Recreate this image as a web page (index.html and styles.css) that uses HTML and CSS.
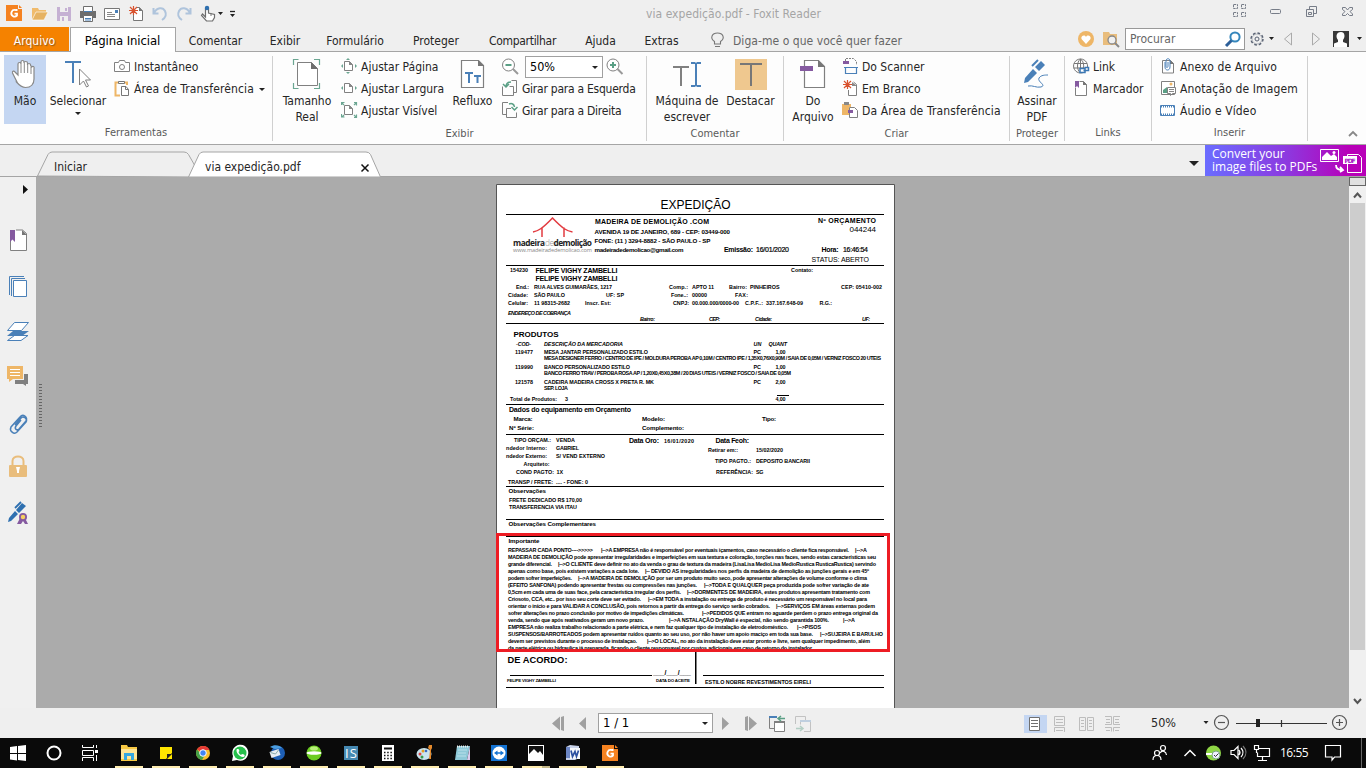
FILE: index.html
```html
<!DOCTYPE html>
<html lang="pt-BR">
<head>
<meta charset="utf-8">
<title>via expedição.pdf - Foxit Reader</title>
<link rel="stylesheet" href="styles.css">
</head>
<body>
<div class="app">
<header class="titlebar">
  <div class="quick">
    <svg width="26" height="27" viewBox="2 0 26 27"><path d="M6 5h12v4h4v12H6z" fill="#f58220"/><path d="M19 5l3 3h-3z" fill="#f58220"/><path d="M17.500 10h-2a3.300 3.300 0 1 0 1.500 5.500v-1.800h-2.500" fill="none" stroke="#fff" stroke-width="1.800"/></svg>
    <svg width="24" height="27" viewBox="28 0 24 27"><path d="M32 20V8h6l1 2h7v3H36z" fill="#f0bb6c"/><path d="M32 20l4-8h12l-4 8z" fill="#e6b262" stroke="#fff" stroke-width=".6"/></svg>
    <svg width="24" height="27" viewBox="52 0 24 27"><path d="M57 7h14v14H57z" fill="#c5b1d3"/><path d="M60 7h8v5h-8zM60 16h8v5h-8z" fill="#efefef"/><path d="M65 8h2v3h-2zM62 17h2v4h-2z" fill="#c5b1d3"/></svg>
    <svg width="24" height="27" viewBox="76 0 24 27"><path d="M80 11h16v7H80z" fill="#6e6e6e"/><path d="M83.500 6.500h9v5h-9z" fill="#fff" stroke="#6e6e6e"/><path d="M83.500 15.500h9v6h-9z" fill="#fff" stroke="#6e6e6e"/><path d="M84 11.500h8M85 18.500h6M85 20h6" stroke="#4a80b8"/></svg>
    <svg width="24" height="27" viewBox="100 0 24 27"><path d="M104.500 8.500h15v11h-15z" fill="#fff" stroke="#777"/><path d="M107 12.500h5M107 14.500h8M107 16.500h8" stroke="#888"/><path d="M115 10h3v3h-3z" fill="#4a80b8"/></svg>
    <svg width="24" height="27" viewBox="124 0 24 27"><path d="M133.500 13v7.500h9V11l-3-3.500h-3" fill="#fff" stroke="#777"/><path d="M139 7v4h4z" fill="#777"/><path d="M129 10.500h9M133.500 6v9M130 7l7 7M137 7l-7 7" stroke="#d9532f" stroke-width="1.200"/></svg>
    <svg width="24" height="27" viewBox="148 0 24 27"><path d="M154 13c3-6 9-6 11-2s0 7-3 9M153.500 8v5.500h5" fill="none" stroke="#afc4dc" stroke-width="2"/></svg>
    <svg width="24" height="27" viewBox="172 0 24 27"><path d="M190 13c-3-6-9-6-11-2s0 7 3 9M190.500 8v5.500h-5" fill="none" stroke="#afc4dc" stroke-width="2"/></svg>
    <svg width="44" height="27" viewBox="196 0 44 27"><path d="M205.500 17V8q1.500-2 3 0v5l6 1.500v3l-2 3.500h-6l-5-5.500 1-1.500z" fill="#fff" stroke="#6e6e6e" stroke-width="1.200"/><path d="M211 13v3" stroke="#777"/><circle cx="207" cy="8" r="2.200" fill="#2f70b0"/><path d="M218 12h5l-2.500 3zM230 14h5l-2.500 3z" fill="#222"/><path d="M230 11.500h5" stroke="#222" stroke-width="1.300"/></svg>
  </div>
  <div class="doc-title">via expedição.pdf - Foxit Reader</div>
  <svg class="winctl" width="150" height="27" viewBox="1216 0 150 27"><g fill="none" stroke="#777d88"><path d="M1233.500 4.500h4v4h-4zM1241.500 4.500h4v4h-4zM1233.500 12.500h4v4h-4zM1241.500 12.500h4v4h-4z" stroke-dasharray="2.500 .8"/><rect x="1270.500" y="9.500" width="10" height="4" rx="1"/><path d="M1306.500 9.500h7v7h-7zM1308.500 12.500h3v2h-3zM1309.500 9V6.500h7v7H1314"/><path d="M1342.500 7.500h3l2 2.500 2-2.500h3v2l-2.500 2 2.500 2.500v1.500h-3l-2-2-2 2h-3v-1.500l2.500-2.500-2.500-2z"/></g></svg>
</header>
<nav class="menubar">
  <span class="file-tab">Arquivo</span><span class="tab-on">Página Inicial</span>
  <span class="mi m1">Comentar</span><span class="mi m2">Exibir</span><span class="mi m3">Formulário</span><span class="mi m4">Proteger</span><span class="mi m5">Compartilhar</span><span class="mi m6">Ajuda</span><span class="mi m7">Extras</span>
  <svg width="26" height="24" viewBox="704 27 26 24"><path d="M714.500 44v-2.500c-5-3.500-2.500-8.500 3-8.500s8 5 3 8.500V44zM715 46.500h5" fill="none" stroke="#777" stroke-width="1.100"/></svg>
  <span class="tell">Diga-me o que você quer fazer</span>
  <div class="menu-right">
    <svg width="50" height="24" viewBox="1074 27 50 24"><circle cx="1086" cy="39" r="8" fill="#eeb667"/><path d="M1086 44l-4.500-5c-1-3 3-5 4.500-2 1.500-3 5.500-1 4.500 2z" fill="#fff"/><path d="M1103 45V32h6l1 2h7v11z" fill="#e9bd7c"/><circle cx="1112" cy="40" r="4" fill="#f0f0f0" stroke="#888" stroke-width="1.300"/><path d="M1115 43l4 4" stroke="#888" stroke-width="2"/></svg>
    <div class="search"><span>Procurar</span><svg width="18" height="18" viewBox="0 0 18 18"><circle cx="11" cy="7" r="4.600" fill="#fff" stroke="#3586bb" stroke-width="2"/><path d="M7.500 10.500L2 16" stroke="#2d5f99" stroke-width="3"/></svg></div>
    <svg width="120" height="24" viewBox="1246 27 120 24"><circle cx="1257" cy="39" r="5.900" fill="none" stroke="#596273" stroke-width="1.600" stroke-dasharray="2.600 2"/><circle cx="1257" cy="39" r="5" fill="#efefef" stroke="#8a909c" stroke-width=".6"/><circle cx="1257" cy="39" r="2" fill="none" stroke="#596273"/><path d="M1269 37h5l-2.500 3zM1357 37h5l-2.500 3z" fill="#222"/><path d="M1291.500 33v12l-7-6zM1312.500 33v12l7-6z" fill="none" stroke="#aaa"/><path d="M1333 31h16v16h-16z" fill="#383838"/><path d="M1341 32c4 0 4.500 5 2 8v2l4 1.500V47h-13v-3.500l4-1.500v-2c-2.500-3-2-8 3-8z" fill="#fff"/></svg>
  </div>
</nav>
<section class="ribbon">
  <div class="group g1">
    <div class="tools">
      <div class="big hand on"><svg width="34" height="34" viewBox="9 57 34 34"><path d="M18 82l-4.500-9c-.5-2 1.500-2.500 2.500-1l3 3V64c0-2 3-2 3 0v-2c0-2 3-2 3 0v1c0-2 3.500-2 3.500 0v2c0-2 3-2 3 0l1 2c2-1.500 3 0 2.500 2v10c0 5-3 8.500-8.500 8.500-4 0-6-2-9-5.500z" fill="#fff" stroke="#888" stroke-width="1.200"/><path d="M22 64v9M25.300 63v10M28.700 65v8M32 67v7" stroke="#888"/></svg><span>Mão</span></div>
      <div class="big sel"><svg width="34" height="34" viewBox="61 57 34 34"><path d="M65 61h16v2h-7v20h-2V63h-7z" fill="#4a80b8"/><path d="M79.500 69v16l4-4 3 6 2-1-3-6h5z" fill="#fff" stroke="#808080"/></svg><span>Selecionar</span><i class="down"></i></div>
      <div class="list l1">
        <div class="row"><svg width="20" height="20" viewBox="114 57 20 20"><path d="M114.500 62.500h4l1-2h5l1 2h4v9h-15z" fill="#fff" stroke="#808080"/><circle cx="122" cy="67" r="2.500" fill="none" stroke="#808080"/></svg><span>Instantâneo</span></div>
        <div class="row"><svg width="20" height="20" viewBox="114 79 20 20"><path d="M120 95.500h-4.500v-13H127V85" fill="none" stroke="#eeb667" stroke-width="2"/><path d="M118.500 81.500h6v2h-6z" fill="#fff" stroke="#777"/><path d="M121.500 86.500h4.500l2.500 3v6h-7z" fill="#fff" stroke="#777"/><path d="M125.500 86.500v3h3" fill="none" stroke="#777"/></svg><span class="wide">Área de Transferência</span><i class="down after"></i></div>
      </div>
    </div><div class="cap">Ferramentas</div>
  </div>
  <div class="group g2">
    <div class="tools">
      <div class="big tam"><svg width="34" height="34" viewBox="290 57 34 34"><path d="M297.500 62.500h14l6 6v17h-20z" fill="#fff" stroke="#808080"/><path d="M311 62v7h7z" fill="#6e6e6e"/><path d="M293.500 65v-5.500h5M314 59.500h5.500V65M293.500 83v5.500h5M314 88.500h5.500V83" fill="none" stroke="#6ba692" stroke-width="1.200"/></svg><span>Tamanho<br>Real</span></div>
      <div class="list l2">
        <div class="row"><svg width="20" height="20" viewBox="341 57 20 20"><path d="M344.500 61.500h5l3 3v6h-8z" fill="#fff" stroke="#808080"/><path d="M349 61v4h4z" fill="#888"/><path d="M346 60h4l-2-2zM346 72h4l-2 2zM343 64v4l-2-2zM355 64v4l2-2z" fill="#6ba692"/></svg><span>Ajustar Página</span></div>
        <div class="row"><svg width="20" height="20" viewBox="341 79 20 20"><path d="M344.500 83.500h5l3 3v6h-8z" fill="#fff" stroke="#808080"/><path d="M349 83v4h4z" fill="#888"/><path d="M343 86v4l-2-2zM355 86v4l2-2z" fill="#6ba692"/></svg><span>Ajustar Largura</span></div>
        <div class="row"><svg width="20" height="20" viewBox="341 101 20 20"><path d="M344.500 105.500h5l3 3v6h-8z" fill="#fff" stroke="#808080"/><path d="M349 105v4h4z" fill="#888"/><path d="M341.500 105v-2.500h3M354 102.500h2.500v3M341.500 114v3h3M354 117.500h2.500v-3M342 103l2 2M356 103l-2 2M342 117l2-2M356 117l-2-2" fill="none" stroke="#6ba692" stroke-width="1.200"/></svg><span>Ajustar Visível</span></div>
      </div>
      <div class="big ref"><svg width="34" height="34" viewBox="455 57 34 34"><path d="M460.500 60.500h17l5 5v22h-22z" fill="#fff" stroke="#808080" stroke-width="1.200"/><path d="M477 60v6h6z" fill="#777"/><path d="M464 73h8M468 73v10M473 76h7M476.500 76v7" stroke="#4a80b8" stroke-width="2"/></svg><span>Refluxo</span></div>
      <div class="list l3">
        <div class="row zoomrow"><svg width="23" height="22" viewBox="502 56 23 22"><circle cx="508.500" cy="65" r="6" fill="#fff" stroke="#808080"/><path d="M505.500 65h6" stroke="#5a9f85" stroke-width="2"/><path d="M513 69l5 5" stroke="#999" stroke-width="2"/></svg><div class="zoom">50%<i class="down"></i></div><svg width="20" height="22" viewBox="604 56 20 22"><circle cx="613" cy="65" r="6" fill="#fff" stroke="#808080"/><path d="M610 65h6M613 62v6" stroke="#5a9f85" stroke-width="2"/><path d="M617.500 69l5 5" stroke="#999" stroke-width="2"/></svg></div>
        <div class="row"><svg width="20" height="20" viewBox="502 79 20 20"><path d="M511.500 80.500h5v12H514M502.500 86.500v9h11v-9h-4" fill="none" stroke="#808080"/><path d="M506 87c0-3 1-5 5-5M503 84l3 3 3-3" fill="none" stroke="#5a9f85" stroke-width="1.500"/></svg><span>Girar para a Esquerda</span></div>
        <div class="row"><svg width="20" height="20" viewBox="502 101 20 20"><path d="M508 102.500h-5.500v12h4M511 108.500h-4.500v9h10v-5" fill="none" stroke="#808080"/><path d="M509 104c3-1 5 0 5.500 3M511.500 107l3 3 3-3" fill="none" stroke="#5a9f85" stroke-width="1.500"/></svg><span>Girar para a Direita</span></div>
      </div>
    </div><div class="cap">Exibir</div>
  </div>
  <div class="group g3">
    <div class="tools">
      <div class="big maq"><svg width="34" height="34" viewBox="670 57 34 34"><path d="M673 66h16v2h-7v18h-2V68h-7z" fill="#808080"/><path d="M691 62h4l1 1 1-1h4v2h-4v21h4v2h-4l-1-1-1 1h-4v-2h4V64h-4z" fill="#4a80b8"/></svg><span>Máquina de<br>escrever</span></div>
      <div class="big des"><svg width="34" height="34" viewBox="734 57 34 34"><path d="M735 59h32v31h-32z" fill="#efc88f"/><path d="M740 63h22v2h-10v21h-2V65h-10z" fill="#777"/></svg><span>Destacar</span></div>
    </div><div class="cap">Comentar</div>
  </div>
  <div class="group g4">
    <div class="tools">
      <div class="big arq"><svg width="34" height="34" viewBox="796 57 34 34"><path d="M804.500 60.500h14l6 6v21h-20z" fill="#fff" stroke="#808080" stroke-width="1.200"/><path d="M818 60v7h7z" fill="#777"/><path d="M800 66h13v5h-13z" fill="#855aa0"/></svg><span>Do<br>Arquivo</span></div>
      <div class="list l4">
        <div class="row"><svg width="20" height="20" viewBox="842 57 20 20"><path d="M845.500 61v-2.500h8l3 3V65" fill="none" stroke="#808080" stroke-dasharray="2 1"/><path d="M843 61h6v3h-6z" fill="#855aa0"/><path d="M844 67.500h14M845.500 67v6.500h11V67" fill="none" stroke="#4a80b8" stroke-width="1.200"/></svg><span>Do Scanner</span></div>
        <div class="row"><svg width="20" height="20" viewBox="842 79 20 20"><path d="M848.500 90v5.500h8v-11l-3-2.500" fill="#fff" stroke="#808080"/><path d="M852 82v4h5z" fill="#888"/><path d="M843 84.500h9M847.500 80v9M844 81l7 7M851 81l-7 7" stroke="#d9532f" stroke-width="1.200"/></svg><span>Em Branco</span></div>
        <div class="row"><svg width="20" height="20" viewBox="842 101 20 20"><path d="M842 104h9v3h-2v8h-7z" fill="#eeb667"/><path d="M844 102h5v3h-5z" fill="#888"/><path d="M849.500 107.500h5l3 3v7h-8z" fill="#fff" stroke="#808080"/><path d="M848 110h5v3h-5z" fill="#855aa0"/></svg><span class="wide">Da Área de Transferência</span></div>
      </div>
    </div><div class="cap">Criar</div>
  </div>
  <div class="group g5">
    <div class="tools"><div class="big ass"><svg width="34" height="34" viewBox="1020 57 34 34"><path d="M1041 61l4 4-6 6-4-4zM1033 69l4 4-9 9-4 1 1-5z" fill="#4a80b8"/><path d="M1032 66l6-6" stroke="#4a80b8" stroke-width="2"/><path d="M1028 86c5-1 8 2 13 1 6-2-4-5-2-9 2-3 6-3 9-3" fill="none" stroke="#4a80b8"/></svg><span>Assinar<br>PDF</span></div></div><div class="cap">Proteger</div>
  </div>
  <div class="group g6">
    <div class="tools"><div class="list">
      <div class="row"><svg width="20" height="20" viewBox="1073 57 20 20"><path d="M1080.500 59a7 7 0 1 0 .1 0zM1080.500 59c-4 3-4 11 0 14M1080.500 59c4 3 4 9 1 13M1080.500 59v14M1074 63.500h13M1073.500 68h13" fill="none" stroke="#777"/><path d="M1080 68.500h5v4h-5zM1083.500 70.500h5v-3h-4" fill="#fff" stroke="#3c78b4" stroke-width="1.500"/></svg><span>Link</span></div>
      <div class="row"><svg width="20" height="20" viewBox="1073 79 20 20"><path d="M1075.500 88v7.500h11v-11l-3-3h-4" fill="#fff" stroke="#808080"/><path d="M1083 81v4h4z" fill="#777"/><path d="M1075 81h4v7l-2-2-2 2z" fill="#855aa0"/></svg><span>Marcador</span></div>
    </div></div><div class="cap">Links</div>
  </div>
  <div class="group g7">
    <div class="tools"><div class="list">
      <div class="row"><svg width="20" height="20" viewBox="1160 57 20 20"><path d="M1162.500 60.500h8l3 3v9.500h-11z" fill="#fff" stroke="#808080"/><path d="M1170 60v4h4z" fill="#777"/><path d="M1165 62v5c0 4 5 4 5 0v-6c0-3-4-3-4 0v5c0 2 2 2 2 0v-4" fill="none" stroke="#4a80b8"/></svg><span class="wide">Anexo de Arquivo</span></div>
      <div class="row"><svg width="20" height="20" viewBox="1160 79 20 20"><path d="M1161.500 81.500h13v13h-13z" fill="#fff" stroke="#808080"/><path d="M1163 93v-3l4-3v6z" fill="#5a9f85"/><circle cx="1171" cy="84" r="1.500" fill="#eeb667"/><path d="M1167.500 87.500h8v6h-3l-2 2v-2h-3z" fill="#fff" stroke="#808080"/><path d="M1169 89.500h5M1169 91.500h5" stroke="#888"/></svg><span class="wide">Anotação de Imagem</span></div>
      <div class="row"><svg width="20" height="20" viewBox="1160 101 20 20"><path d="M1160.500 105.500h14v10h-14z" fill="#fff" stroke="#4a80b8"/><path d="M1161 106.500h14M1161 114.500h14" stroke="#4a80b8" stroke-width="2" stroke-dasharray="1 1"/></svg><span class="wide">Áudio e Vídeo</span></div>
    </div></div><div class="cap">Inserir</div>
  </div>
  <svg class="collapse" width="12" height="10" viewBox="0 0 12 10"><path d="M2 7l4-4 4 4" fill="none" stroke="#888" stroke-width="1.800"/></svg>
</section>
<div class="doctabs">
  <svg class="tabshape" width="346" height="32" viewBox="36 145 346 32"><path d="M37.500 176L48 154.500q1.500-2.500 4-2.500h132q3 0 4.500 2.500l6 10.500v12z" fill="#efefef" stroke="#a5a5a5"/><path d="M188.500 177L199 154.500q1.500-2.500 4-2.500h163q3 0 4.500 2.500L380.500 177z" fill="#fff" stroke="#a5a5a5"/><path d="M361.500 164.500l7 7M368.500 164.500l-7 7" stroke="#111" stroke-width="1.500"/></svg>
  <span class="t1">Iniciar</span><span class="t2">via expedição.pdf</span>
  <div class="promo-wrap"><i class="down"></i><div class="promo"><div class="promo-text"><span>Convert your</span><span>image files to PDFs</span></div><svg width="46" height="31" viewBox="1320 145 46 31"><path d="M1320.500 149.500h18v12h-18z" fill="none" stroke="#fff"/><path d="M1322 160v-3l5-5 4 4 3-2 3 3v3z" fill="#fff"/><circle cx="1334" cy="152.500" r="1.500" fill="#fff"/><path d="M1336 165c0 4 2 5 6 5M1340 167l3 3-3 2" fill="none" stroke="#fff" stroke-width="1.800"/><path d="M1347.500 164v8.500h14v-15l-3-3h-11v2" fill="none" stroke="#fff"/><path d="M1343 156h14v8h-14z" fill="#fff"/><text x="1344.500" y="162.500" textLength="11" class="pdf">PDF</text></svg></div></div>
</div>
<main class="work">
  <aside class="side">
    <svg width="36" height="40" viewBox="0 177 36 40"><path d="M23 185v9l5-4.500z" fill="#111"/></svg>
    <svg width="36" height="46" viewBox="0 217 36 46"><path d="M10.500 241v9.500h16v-17l-4-3.500H16" fill="#fff" stroke="#808080"/><path d="M22 230v5h5z" fill="#777"/><path d="M10 230h5v12l-2.500-2.500L10 242z" fill="#855aa0"/></svg>
    <svg width="36" height="46" viewBox="0 263 36 46"><path d="M9.500 295v-18.500H24M11.500 296v-17.500H25" fill="none" stroke="#4a80b8"/><path d="M13.500 280.500h13v16h-13z" fill="#fff" stroke="#4a80b8"/></svg>
    <svg width="36" height="46" viewBox="0 309 36 46"><path d="M7.500 340.500l7-5h13.500l-7 5z" fill="#fff" stroke="#4a80b8"/><path d="M7 336l6-5h16l-7 5z" fill="#4a80b8"/><path d="M7.500 330.500l7-8h14l-7 8z" fill="#fff" stroke="#4a80b8"/></svg>
    <svg width="36" height="46" viewBox="0 355 36 46"><path d="M24 374h4v10h-2v2l-3-2h-8v-4h9z" fill="#808080"/><path d="M7 366h16v13H13l-4 3v-3H7z" fill="#eeb667"/><path d="M10 369.500h10M10 372.500h10M10 375.500h10" stroke="#fff"/></svg>
    <svg width="36" height="46" viewBox="0 401 36 46"><path d="M15 425l6-7c2-3 7 1 5 4l-9 10c-3 3-8-1-6-5l9-10c3-4 8 0 6 4l-7 8c-2 2-5 0-3-3l5-6" fill="none" stroke="#4a80b8" stroke-width="1.500"/></svg>
    <svg width="36" height="46" viewBox="0 447 36 46"><path d="M12.500 466v-5c0-6 11-6 11 0v5" fill="none" stroke="#e9bd7c" stroke-width="2"/><rect x="9" y="465" width="18" height="12" rx="1" fill="#e9bd7c"/><path d="M16 467h4l-1 4v2h-2v-2z" fill="#fff"/></svg>
    <svg width="36" height="46" viewBox="0 493 36 46"><path d="M22 503l4 3-7 7-3-3zM15 511l3 3-7 7-3 1 1-4z" fill="#2f70b0"/><path d="M15 508l6-6" stroke="#2f70b0" stroke-width="1.800"/><path d="M20 518l-3 6h4l2-3 2 3h3l-3-6z" fill="#855aa0"/><circle cx="23" cy="517" r="4" fill="#855aa0"/><circle cx="23" cy="517" r="2.200" fill="#f5d060"/></svg>
  </aside>
  <div class="canvas">
    <i class="grip"></i>
    <svg class="page" width="399" height="524" viewBox="496 184 399 524">
      <path d="M496.500 709V184.500h398V709" fill="#fff" stroke="#555"/>
      <g class="rules"><path d="M506 214.500h378M506 265.500h378M506 323.500h378M777 395.500h12M506 404.500h378M506 434.500h378M506 486.500h378M506 519.500h378M506 536.500h378M510 675.500h142M703 675.500h181M506 687.500h378M695.500 652v32M696 652v32"/></g>
      <path d="M533 232c5-1 9-3 19.500-14 10.500 11 14.500 13 20 14M542 227.500v9.500M564 227.500v9.500" fill="none" stroke="#e23b40" stroke-width="1.500"/>
      <g class="logo"><text x="513" y="246" textLength="32">madeira</text><text x="545" y="246" textLength="9" class="lt">de</text><text x="553.500" y="246" textLength="38.500">demolição</text><text x="513" y="252" textLength="79" class="url">www.madeiradedemolicao.com</text></g>
      <g class="n"><text x="660.500" y="209.300" textLength="70" class="s13">EXPEDIÇÃO</text><text x="849.500" y="232" textLength="26.500" class="s8">044244</text><text x="811.500" y="262" textLength="57.500" class="s7">STATUS: ABERTO</text></g>
      <g class="b s7"><text x="595" y="224" textLength="114">MADEIRA DE DEMOLIÇÃO .COM</text><text x="818" y="223" textLength="58">Nº ORÇAMENTO</text><text x="724" y="252" textLength="29">Emissão:</text><text x="756" y="252" textLength="33" class="md">16/01/2020</text><text x="821.500" y="252" textLength="17">Hora:</text><text x="843" y="252" textLength="25" class="md">16:46:54</text><text x="535.500" y="273" textLength="82">FELIPE VIGHY ZAMBELLI</text><text x="535.500" y="281" textLength="82">FELIPE VIGHY ZAMBELLI</text><text x="509" y="412" textLength="122">Dados do equipamento em Orçamento</text><text x="629" y="443" textLength="30">Data Oro:</text><text x="715.500" y="443" textLength="33.500">Data Feoh:</text></g>
      <g class="b s6"><text x="594.500" y="234" textLength="135.500">AVENIDA 19 DE JANEIRO, 689 - CEP: 03449-000</text><text x="594.500" y="243" textLength="116">FONE: (11 ) 3294-8882 - SÃO PAULO - SP</text><text x="594.500" y="252" textLength="89">madeiradedemolicao@gmail.com</text><text x="513.500" y="421" textLength="19">Marca:</text><text x="642" y="421" textLength="23">Modelo:</text><text x="762" y="421" textLength="14">Tipo:</text><text x="509" y="430" textLength="25">Nº Série:</text><text x="642" y="430" textLength="42">Complemento:</text><text x="508.500" y="493" textLength="37.500">Observações</text><text x="508.500" y="526" textLength="87.500">Observações Complementares</text><text x="508.500" y="543" textLength="31">Importante</text></g>
      <g class="b s5">
        <text x="510" y="272" textLength="18">154230</text><text x="791" y="272" textLength="22">Contato:</text>
        <text x="516" y="289" textLength="13">End.:</text><text x="534" y="289" textLength="78">RUA ALVES GUIMARÃES, 1217</text><text x="669" y="289" textLength="19">Comp.:</text><text x="692" y="289" textLength="22">APTO 11</text><text x="729" y="289" textLength="18">Bairro:</text><text x="750" y="289" textLength="29.500">PINHEIROS</text><text x="841" y="289" textLength="41">CEP: 05410-002</text>
        <text x="508" y="297" textLength="20">Cidade:</text><text x="534" y="297" textLength="31">SÃO PAULO</text><text x="606" y="297" textLength="18">UF: SP</text><text x="671" y="297" textLength="17">Fone..:</text><text x="692" y="297" textLength="15">00000</text><text x="735" y="297" textLength="13">FAX:</text>
        <text x="508" y="305" textLength="20">Celular:</text><text x="534" y="305" textLength="36">11 98315-2682</text><text x="585" y="305" textLength="26">Inscr. Est:</text><text x="673" y="305" textLength="16">CNPJ:</text><text x="692" y="305" textLength="47">00.000.000/0000-00</text><text x="745" y="305" textLength="18">C.P.F..:</text><text x="766" y="305" textLength="37">337.167.648-09</text><text x="819.500" y="305" textLength="12.500">R.G.:</text>
        <g class="it"><text x="508" y="315" textLength="63">ENDEREÇO DE COBRANÇA</text><text x="640" y="321" textLength="15">Bairro:</text><text x="709" y="321" textLength="11">CEP:</text><text x="755" y="321" textLength="17">Cidade:</text><text x="862" y="321" textLength="8">UF:</text><text x="516" y="346" textLength="15">-COD-</text><text x="544" y="346" textLength="79">DESCRIÇÃO DA MERCADORIA</text><text x="753.500" y="346" textLength="8">UN</text><text x="768.500" y="346" textLength="18.500">QUANT</text></g>
        <text x="513.500" y="337" textLength="45" class="s8">PRODUTOS</text>
        <text x="515" y="354" textLength="18">119477</text><text x="544" y="354" textLength="104">MESA JANTAR PERSONALIZADO ESTILO</text><text x="753.500" y="354" textLength="7.500">PC</text><text x="775.500" y="354" textLength="10">1,00</text>
        <text x="544" y="360" textLength="337">MESA DESIGNER FERRO / CENTRO DE IPE / MOLDURA PEROBA AP 0,10M / CENTRO IPE / 1,35X0,76X0,90M / SAIA DE 0,05M / VERNIZ FOSCO 20 UTEIS</text>
        <text x="515" y="369" textLength="18">119990</text><text x="544" y="369" textLength="86">BANCO PERSONALIZADO ESTILO</text><text x="753.500" y="369" textLength="7.500">PC</text><text x="775.500" y="369" textLength="10">1,00</text>
        <text x="544" y="375" textLength="247">BANCO FERRO TRAV / PEROBA ROSA AP / 1,20X0,45X0,38M / 20 DIAS UTEIS / VERNIZ FOSCO / SAIA DE 0,05M</text>
        <text x="515" y="384" textLength="18">121578</text><text x="544" y="384" textLength="110">CADEIRA MADEIRA CROSS X PRETA R. MK</text><text x="753.500" y="384" textLength="7.500">PC</text><text x="775.500" y="384" textLength="10">2,00</text><text x="544" y="390" textLength="24">SEP. LOJA</text>
        <text x="510" y="401" textLength="47">Total de Produtos:</text><text x="565" y="401">3</text><text x="775.500" y="401" textLength="10">4,00</text>
        <text x="514" y="442" textLength="37">TIPO ORÇAM.:</text><text x="556" y="442" textLength="19">VENDA</text><text x="664" y="443" textLength="30">16/01/2020</text>
        <text x="506" y="450" textLength="41">ndedor Interno:</text><text x="556" y="450" textLength="23">GABRIEL</text><text x="708" y="452" textLength="30">Retirar em::</text><text x="756" y="452" textLength="27">15/02/2020</text>
        <text x="506" y="458" textLength="41">ndedor Externo:</text><text x="556" y="458" textLength="49">S/ VEND EXTERNO</text><text x="715" y="463" textLength="36">TIPO PAGTO.:</text><text x="756" y="463" textLength="54">DEPOSITO BANCARII</text>
        <text x="523.500" y="466" textLength="26">Arquiteto:</text><text x="516" y="474" textLength="38">COND PAGTO:</text><text x="556.500" y="474">1X</text><text x="716" y="474" textLength="37">REFERÊNCIA:</text><text x="756" y="474" textLength="7.500">SG</text>
        <text x="508" y="484" textLength="45">TRANSP / FRETE:</text><text x="556" y="484" textLength="32">.... - FONE: 0</text>
        <text x="509" y="502" textLength="73">FRETE DEDICADO R$ 170,00</text><text x="509" y="509" textLength="68">TRANSFERENCIA VIA ITAU</text>
        <g class="notes">
        <text x="508" y="552" textLength="85">REPASSAR CADA PONTO----&gt;&gt;&gt;&gt;&gt;</text><text x="601" y="552" textLength="248">|--&gt;A EMPRESA não é responsável por eventuais içamentos, caso necessário o cliente fica responsável.</text><text x="855" y="552" textLength="12">|--&gt;A</text>
        <text x="508" y="559" textLength="368">MADEIRA DE DEMOLIÇÃO pode apresentar irregularidades e imperfeições em sua textura e coloração, torções nas faces, sendo estas características seu</text>
        <text x="508" y="566" textLength="44">grande diferencial.</text><text x="558" y="566" textLength="318">|--&gt;O CLIENTE deve definir no ato da venda o grau de textura da madeira (LisaLisa MedioLisa MedioRustica RusticaRustica) servindo</text>
        <text x="508" y="573" textLength="131">apenas como base, pois existem variações a cada lote.</text><text x="645" y="573" textLength="224">|-- DEVIDO AS irregularidades nos perfis da madeira de demolição as junções gerais e em 45º</text>
        <text x="508" y="580" textLength="64">podem sofrer imperfeições.</text><text x="578" y="580" textLength="289">|--&gt;A MADEIRA DE DEMOLIÇÃO por ser um produto muito seco, pode apresentar alterações de volume conforme o clima</text>
        <text x="508" y="587" textLength="189">(EFEITO SANFONA) podendo apresentar frestas ou compressões nas junções.</text><text x="704" y="587" textLength="165">|--&gt;TODA E QUALQUER peça produzida pode sofrer variação de ate</text>
        <text x="508" y="594" textLength="173">0,5cm em cada uma de suas face, pela característica irregular dos perfis.</text><text x="687" y="594" textLength="183">|--&gt;DORMENTES DE MADEIRA, estes produtos apresentam tratamento com</text>
        <text x="508" y="601" textLength="133">Criosoto, CCA, etc.. por isso seu corte deve ser evitado.</text><text x="648" y="601" textLength="219">|--&gt;EM TODA a instalação ou entrega de produto é necessário um responsável no local para</text>
        <text x="508" y="608" textLength="262">orientar o início e para VALIDAR A CONCLUSÃO, pois retornos a partir da entrega do serviço serão cobrados.</text><text x="776" y="608" textLength="99">|--&gt;SERVIÇOS EM áreas externas podem</text>
        <text x="508" y="615" textLength="176">sofrer alterações no prazo conclusão por motivo de impedições climáticas.</text><text x="702" y="615" textLength="176">|--&gt;PEDIDOS QUE entram no aguarde perdem o prazo entrega original da</text>
        <text x="508" y="622" textLength="136">venda, sendo que após reativados geram um novo prazo.</text><text x="669" y="622" textLength="160">|--&gt;A NSTALAÇÃO DryWall é especial, não sendo garantida 100%.</text><text x="843" y="622" textLength="12">|--&gt;A</text>
        <text x="508" y="629" textLength="280">EMPRESA não realiza trabalho relacionado a parte elétrica, e nem faz qualquer tipo de instalação de eletrodoméstico.</text><text x="797" y="629" textLength="24">|--&gt;PISOS</text>
        <text x="508" y="636" textLength="305">SUSPENSOS/BARROTEADOS podem apresentar ruídos quanto ao seu uso, por não haver um apoio maciço em toda sua base.</text><text x="820" y="636" textLength="63">|--&gt;SUJEIRA E BARULHO</text>
        <text x="508" y="643" textLength="129">devem ser previstos durante o processo de instalaçao.</text><text x="647" y="643" textLength="223">|--&gt;O LOCAL, no ato da instalação deve estar pronto e livre, sem qualquer impedimento, além</text>
        <text x="508" y="650" textLength="304">da parte elétrica ou hidraulica já preparada, ficando o cliente responsavel por custos adicionais em caso de retorno do instalador</text>
        </g>
        <text x="507.500" y="663" textLength="60" class="s9">DE ACORDO:</text><text x="653" y="674.500" textLength="38" class="s7">___/___/___</text>
        <text x="705" y="684" textLength="106">ESTILO NOBRE REVESTIMENTOS EIRELI</text><text x="507" y="682" textLength="49" class="s4">FELIPE VIGHY ZAMBELLI</text><text x="656" y="682" textLength="34" class="s4">DATA DO ACEITE</text>
      </g>
      <rect x="497.500" y="534.500" width="391" height="116" fill="none" stroke="#ed1c24" stroke-width="3"/>
    </svg>
  </div>
  <div class="scroll"><i class="split"></i><svg width="17" height="16" viewBox="0 0 17 16"><path d="M5 10.500l3.500-4 3.500 4" fill="none" stroke="#555" stroke-width="2"/></svg><i class="thumb"></i><svg width="17" height="16" viewBox="0 0 17 16"><path d="M5 7l3.500 4L12 7" fill="none" stroke="#555" stroke-width="2"/></svg></div>
</main>
<footer class="status">
  <svg class="pg1" width="48" height="30" viewBox="550 708 48 30"><path d="M552 723.500l8-7v14zM561 717l3-1v15l-3-1zM579 723.500l7-6.500v13z" fill="#a0a0a0"/></svg>
  <div class="pagebox">1 / 1<i class="down"></i></div>
  <svg width="110" height="30" viewBox="713 708 110 30"><path d="M722 717v13l7-6.500zM745 717l3-1v15l-3-1zM749 716.500v14l8-7z" fill="#a0a0a0"/><path d="M774 728.500h-4.500v-12H777" fill="none" stroke="#808080"/><path d="M769 716h8v2h-8z" fill="#4a80b8"/><path d="M774.500 721.500h10v10h-10z" fill="#fff" stroke="#808080"/><path d="M774 722h11" stroke="#808080" stroke-width="2"/><path d="M785 718.500h-7M781 716l-3 2.500 3 2.500" fill="none" stroke="#5a9f85" stroke-width="1.500"/><g opacity=".4"><path d="M795.500 724v-7.500h10v4M804 731.500h6.500v-10h-10v3" fill="none" stroke="#808080"/><path d="M800 720h11v2h-11z" fill="#7aa0c8"/><path d="M796 728.500h7M800 726l3 2.500-3 2.500" fill="none" stroke="#5a9f85" stroke-width="1.500"/></g></svg>
  <div class="status-right">
    <svg width="114" height="30" viewBox="1018 708 114 30"><path d="M1024 715h23v18h-23z" fill="#c4d6f2"/><path d="M1029.500 717.500h10v13h-10z" fill="#fff" stroke="#707070"/><path d="M1031 720.500h7M1031 723.500h7M1031 726.500h7" stroke="#707070"/><g fill="none" stroke="#bdbdbd"><path d="M1054.500 716.500h10v9h-10zM1054.500 732v-4.500h10v4.500M1056 719.500h7M1056 722.500h7M1056 730.500h7M1079.500 717.500h6v13h-6zM1087.500 717.500h6v13h-6zM1081 720.500h3M1081 723.500h3M1081 726.500h3M1089 720.500h3M1089 723.500h3M1089 726.500h3M1105 716.500h6.500v8H1105M1120 716.500h-6.500v8h6.500M1105 727.500h6.500v4M1120 727.500h-6.500v4M1106 719.500h4M1106 722.500h4M1115 719.500h4M1115 722.500h4M1106 730.500h4M1115 730.500h4"/></g></svg>
    <span>50%</span>
    <svg width="166" height="30" viewBox="1200 708 166 30"><path d="M1203.500 721h5l-2.500 3z" fill="#222"/><g fill="none" stroke="#555" stroke-width="1.200"><circle cx="1221.500" cy="722.500" r="7"/><path d="M1218 722.500h7"/><circle cx="1339.500" cy="722.500" r="7"/><path d="M1336 722.500h7M1339.500 719v7"/><path d="M1236 723.500h91M1281.500 720v7" stroke="#333"/></g><path d="M1256 719h4v8h-4z" fill="#222"/></svg>
  </div>
</footer>
<div class="taskbar">
  <svg width="110" height="30" viewBox="0 738 110 30"><path d="M10 747l7-1v7h-7zM18 746l8-1v8h-8zM10 754h7v6.500l-7-1zM18 754h8v7l-8-1z" fill="#fff"/><circle cx="54" cy="753" r="6.500" fill="none" stroke="#fff" stroke-width="2"/><path d="M82.500 745v2.500h11V745M82.500 761v-3.500h11v3.500M82.500 750.500h11v5h-11zM96.500 745v3M96.500 755v6" fill="none" stroke="#fff"/><path d="M95 750h3v3h-3z" fill="#fff"/></svg>
  <div class="apps">
    <span><svg width="24" height="24" viewBox="0 0 24 24"><path d="M4 4h6l1 2h9v14H4z" fill="#f8c944"/><path d="M4 8h16v10H4z" fill="#ffe596"/><path d="M7 19v-7h10v7h-3v-4h-4v4z" fill="#35a7e0"/></svg></span>
    <span><svg width="24" height="24" viewBox="0 0 24 24"><path d="M6 6h12v6l-6 6H6z" fill="#ffe600"/><path d="M13 18v-5h5z" fill="#222"/><path d="M18 13v5h-5z" fill="#ffe600"/></svg></span>
    <span><svg width="24" height="24" viewBox="0 0 24 24"><circle cx="12" cy="12" r="7" fill="#fbc02d"/><path d="M12 12L6 8.500A7 7 0 0 1 18.500 9H12z" fill="#e53935"/><path d="M6 8.500A7 7 0 0 0 11 19l3-5h-3z" fill="#43a047"/><circle cx="12" cy="12" r="3.300" fill="#4285f4" stroke="#fff"/></svg></span>
    <span><svg width="24" height="24" viewBox="0 0 24 24"><path d="M4 20l1-5A8 8 0 1 1 9 19z" fill="#fff"/><circle cx="12" cy="12" r="6.500" fill="#25c04b"/><path d="M9 8c-2 2 2 8 6 8 2 0 2-2 1-2.500l-2-.5-1 1c-1-.5-2-1.500-2.500-3l1-1L10.500 8z" fill="#fff"/></svg></span>
    <span><svg width="24" height="24" viewBox="0 0 24 24"><circle cx="13" cy="12" r="7" fill="#1e5fb5"/><path d="M5 6c4-3 10-2 12 1l-7 1z" fill="#4a9de0"/><path d="M4.500 11l9-3 2 6-9 3z" fill="#e8eef4"/><path d="M5.500 11.500l5 1.500 3-4" stroke="#8aa" fill="none"/></svg></span>
    <span><svg width="24" height="24" viewBox="0 0 24 24"><circle cx="12" cy="12" r="7.500" fill="#6ccc22"/><ellipse cx="12" cy="12" rx="7.500" ry="1.800" fill="#fff"/><ellipse cx="12" cy="7.500" rx="4" ry="2" fill="#b8f07a"/></svg></span>
    <span><svg width="24" height="24" viewBox="0 0 24 24"><rect x="5" y="5" width="14" height="14" fill="#4689b2"/><text x="6" y="17" textLength="12" class="ist">IS</text></svg></span>
    <span><svg width="24" height="24" viewBox="0 0 24 24"><path d="M6 4h12v16H6z" fill="#fff"/><path d="M8 7.500h8" stroke="#111" stroke-width="2"/><path d="M8 11.500h8M8 14.500h8M8 17.500h8" stroke="#111" stroke-width="1.500" stroke-dasharray="1.500 1.700"/></svg></span>
    <span><svg width="24" height="24" viewBox="0 0 24 24"><ellipse cx="11" cy="13" rx="7.500" ry="6" fill="#c9e4ef"/><circle cx="7" cy="13" r="1.500" fill="#d44"/><circle cx="10" cy="10" r="1.500" fill="#e8a020"/><circle cx="13" cy="10" r="1.300" fill="#3a6ac0"/><circle cx="9" cy="16" r="1.500" fill="#3a9a4a"/><path d="M16 18l1-9-2-2 1-3h3v3l-1 2v9z" fill="#e58a2c"/></svg></span>
    <span><svg width="24" height="24" viewBox="0 0 24 24"><path d="M7 5h13l-3 14H5z" fill="#8ec9d8"/><path d="M17 19l3-14v14z" fill="#dce"/><path d="M7 5.500h12" stroke="#eee" stroke-width="2" stroke-dasharray="1 1"/><path d="M8 9h9M8 12h8M7 15h9" stroke="#b9e0ea"/></svg></span>
    <span><svg width="24" height="24" viewBox="0 0 24 24"><path d="M4 4h16v16H4z" fill="#1473d2"/><circle cx="12" cy="12" r="6.500" fill="#fff"/><path d="M7 12l3.500-2.500v1.700h3V9.500L17 12l-3.500 2.500v-1.700h-3v1.700z" fill="#1473d2"/></svg></span>
    <span class="pair"><svg width="24" height="24" viewBox="0 0 24 24"><path d="M4 4h16v16H4z" fill="#fff"/><path d="M5 5h14v9l-3-4-2 2-4-4-5 5z" fill="#111"/></svg></span>
    <span><svg width="24" height="24" viewBox="0 0 24 24"><path d="M5 6l4-2 9 1v12l-4 2H5z" fill="#c9d3ea"/><path d="M9 7h10v11H9z" fill="#f5f7fb"/><path d="M5 6h4v11H5z" fill="#6c86c4"/><path d="M10 9.500l1.500 6 2.500-5 1.500 5 2-6" fill="none" stroke="#2b4fa0" stroke-width="1.700"/></svg></span>
    <span><svg width="24" height="24" viewBox="0 0 24 24"><path d="M4 4h12v4h4v12H4z" fill="#f58220"/><path d="M17 4l3 3h-3z" fill="#f58220"/><path d="M15.500 9h-2a3.300 3.300 0 1 0 1.500 5.500v-1.800h-2.500" fill="none" stroke="#fff" stroke-width="1.800"/></svg></span>
  </div>
  <div class="tray">
    <svg width="128" height="30" viewBox="1148 738 128 30"><g fill="none" stroke="#fff" stroke-width="1.200"><circle cx="1157" cy="753" r="2.500"/><path d="M1153 760c0-6 8-6 8 0"/><circle cx="1163" cy="748" r="2.500"/><path d="M1160 753c2-3 6-2 6.500 2"/><path d="M1184.500 756l5.500-5.500 5.500 5.500" stroke-width="1.500"/><path d="M1231 750.500h3l4-4v12l-4-4h-3zM1239 750q2 2.500 0 5M1241 748q4 4.500 0 9"/><path d="M1243 746q6 6.500 0 13" stroke="#777"/><path d="M1259 748.500h10.500v8h-12v-4M1262.500 757v3M1258 760.500h9M1254.500 745.500h4v4h-4zM1256.500 750v3"/></g><circle cx="1213.500" cy="753" r="7.500" fill="#8fd645"/><path d="M1206 753h9v2h-9z" fill="#fff"/><circle cx="1216" cy="755" r="4" fill="#eef" stroke="#7a7"/><path d="M1214 755l1.500 1.500 3-3" stroke="#333" fill="none"/></svg>
    <span>16:55</span>
    <svg width="50" height="30" viewBox="1316 738 50 30"><path d="M1325.500 745.500h15v11.500h-6l-2.500 3v-3h-6.500z" fill="none" stroke="#fff" stroke-width="1.200"/><path d="M1361.500 738v30" stroke="#666"/></svg>
  </div>
</div>
</div>
</body>
</html>
```
FILE: styles.css
```css
* { box-sizing: border-box; }
body { margin: 0; width: 1366px; height: 768px; overflow: hidden; background: #efefef; color: #262626; font: 12px/16px "DejaVu Sans Condensed", "DejaVu Sans", Tahoma, sans-serif; font-stretch: condensed; }
svg { display: block; flex: none; }
i { display: block; }
.app { display: flex; flex-direction: column; height: 768px; }
.down { width: 0; height: 0; border: 3px solid transparent; border-top-color: #222; border-bottom: 0; }

.titlebar { height: 27px; display: flex; justify-content: space-between; }
.quick { display: flex; padding-left: 2px; width: 640px; }
.doc-title { flex: 1; padding: 6px 0 0 6px; color: #a5a5a5; letter-spacing: .05px; }

.menubar { height: 25px; display: flex; border-bottom: 1px solid #a5a5a5; }
.file-tab { width: 69px; background: #f58200; color: #fff; text-align: center; padding-top: 6px; text-shadow: 1px 1px 1px #8a5a20; }
.tab-on { width: 106px; margin-left: 1px; height: 25px; border: 1px solid #a5a5a5; border-bottom: 0; background: #fff; text-align: center; padding: 5px 1px 0 0; color: #000; font-size: 13px; letter-spacing: -.1px; }
.mi { text-align: center; padding-top: 6px; }
.m1 { width: 79px; }
.m2 { width: 60px; }
.m3 { width: 80px; }
.m4 { width: 82px; }
.m5 { width: 91px; letter-spacing: -.3px; }
.m6 { width: 65px; }
.m7 { width: 57px; margin-right: 14px; }
.tell { padding: 6px 0 0 3px; color: #666; white-space: nowrap; letter-spacing: .05px; }
.menu-right { margin-left: auto; display: flex; }
.search { width: 120px; height: 22px; margin: 1px 1px 0; border: 1px solid #999; background: #fff; color: #666; display: flex; justify-content: space-between; align-items: center; padding: 0 2px 0 4px; }

.ribbon { height: 93px; background: #fdfdfd; border-bottom: 1px solid #a5a5a5; display: flex; padding-top: 3px; }
.group { height: 85px; margin-top: 1px; border-right: 1px solid #d0d0d0; display: flex; flex-direction: column; }
.tools { height: 70px; display: flex; }
.cap { text-align: center; color: #5a5a5a; font-size: 11px; line-height: 17px; }
.g1 { width: 273px; }
.g2 { width: 374px; }
.g3 { width: 137px; }
.g4 { width: 226px; }
.g5 { width: 55px; }
.g6 { width: 87px; padding-left: 8px; }
.g7 { width: 156px; padding-left: 8px; }
.g6 .cap, .g7 .cap { margin-left: -8px; }
.big { display: flex; flex-direction: column; align-items: center; text-align: center; white-space: nowrap; padding-top: 1px; }
.big span { margin-top: 2px; }
.big.on { background: #c4d6f2; height: 69px; margin-top: -1px; padding-top: 2px; }
.hand { width: 42px; margin-left: 4px; }
.sel { width: 64px; }
.sel .down { margin-top: 3px; }
.tam { width: 68px; }
.ref { width: 59px; }
.maq { width: 80px; }
.des { width: 47px; }
.arq { width: 58px; }
.ass { width: 54px; }
.list { display: flex; flex-direction: column; }
.l1 { margin-left: 4px; }
.l2 { width: 102px; }
.l3 .row span { letter-spacing: -.25px; }
.row { display: flex; align-items: center; height: 22px; white-space: nowrap; }
.wide { letter-spacing: .13px; }
.after { margin-left: 5px; }
.zoom { width: 78px; height: 22px; border: 1px solid #a0a0a0; background: #fff; color: #000; display: flex; align-items: center; justify-content: space-between; padding: 0 4px; margin-right: 1px; font-size: 12.500px; }
.collapse { margin: 74px 0 0 39px; }

.doctabs { height: 32px; display: flex; border-bottom: 1px solid #a5a5a5; position: relative; }
.tabshape { margin-left: 36px; }
.t1, .t2 { position: absolute; top: 14px; left: 54px; }
.t2 { left: 205px; }
.promo-wrap { margin-left: auto; display: flex; }
.promo-wrap > .down { margin: 16px 6px 0 0; border-width: 5px 5px 0; }
.promo { width: 161px; height: 31px; display: flex; justify-content: space-between; padding-left: 7px; color: #fff; background: linear-gradient(90deg, #6a6cff, #8c3ae0 50%, #b800b8 90%); font: 12px/13px "Open Sans", "Noto Sans", sans-serif; white-space: nowrap; }
.promo-text { padding-top: 2px; width: 107px; display: flex; flex-direction: column; }
.pdf { font: bold 6px "DejaVu Sans", sans-serif; fill: #a40fc4; }

.work { height: 531px; display: flex; }
.side { width: 36px; background: #f0f0f0; flex: none; }
.canvas { width: 1313px; background: #ababab; display: flex; padding-top: 7px; }
.grip { width: 3px; height: 44px; margin: 199px 0 0 3px; background: radial-gradient(circle, #666 .6px, transparent .9px) 0 0 / 2px 3px; }
.page { margin-left: 454px; }
.rules { stroke: #000; stroke-width: 1; }
.n, .b { font-family: "Liberation Sans", Arial, sans-serif; fill: #000; }
.b { font-weight: bold; }
.md { font-weight: normal; stroke: #000; stroke-width: .2px; }
.it { font-style: italic; }
.s13 { font-size: 12px; }
.s9 { font-size: 9.300px; }
.s8 { font-size: 8px; }
.s7 { font-size: 7px; }
.s6 { font-size: 6.200px; }
.s5 { font-size: 5.400px; }
.s4 { font-size: 4.400px; }
.logo { font: bold 8.300px "Open Sans", "Noto Sans", sans-serif; fill: #222; }
.lt { font-weight: 300; fill: #999; }
.url { font-weight: 400; font-size: 5.600px; fill: #888; }
.scroll { width: 17px; background: #f0f0f0; display: flex; flex-direction: column; }
.split { width: 17px; height: 9px; border: 1px solid #666; background: #e0e0e0; margin-bottom: 1px; }
.thumb { flex: 1; width: 15px; margin-left: 1px; background: #cdcdcd; margin-bottom: 42px; }

.status { height: 30px; display: flex; align-items: center; }
.pg1 { margin-left: 550px; }
.pagebox { width: 115px; height: 20px; border: 1px solid #a0a0a0; background: #fff; color: #000; display: flex; align-items: center; justify-content: space-between; padding: 0 4px; font-size: 13px; }
.status-right { margin-left: auto; display: flex; align-items: center; }
.status-right span { width: 68px; padding-left: 19px; font-size: 12.500px; }

.taskbar { height: 30px; background: #0a0a0a; display: flex; color: #fff; }
.apps { display: flex; }
.apps span { width: 28px; height: 30px; margin-left: 9px; padding: 3px 2px 0; border-bottom: 2px solid #ffedb0; }
.apps span:first-child { margin-left: 5px; }
.apps .pair { border-image: linear-gradient(90deg, #ffedb0 70%, #c5b98a 70%) 1; border-width: 0 0 2px; border-style: solid; }
.tray { margin-left: auto; display: flex; }
.tray span { width: 40px; padding: 7px 0 0 4px; font: 12px/16px "Open Sans", "Noto Sans", sans-serif; letter-spacing: -.5px; }
.ist { font: 13px "Open Sans", sans-serif; fill: #fff; }
```
